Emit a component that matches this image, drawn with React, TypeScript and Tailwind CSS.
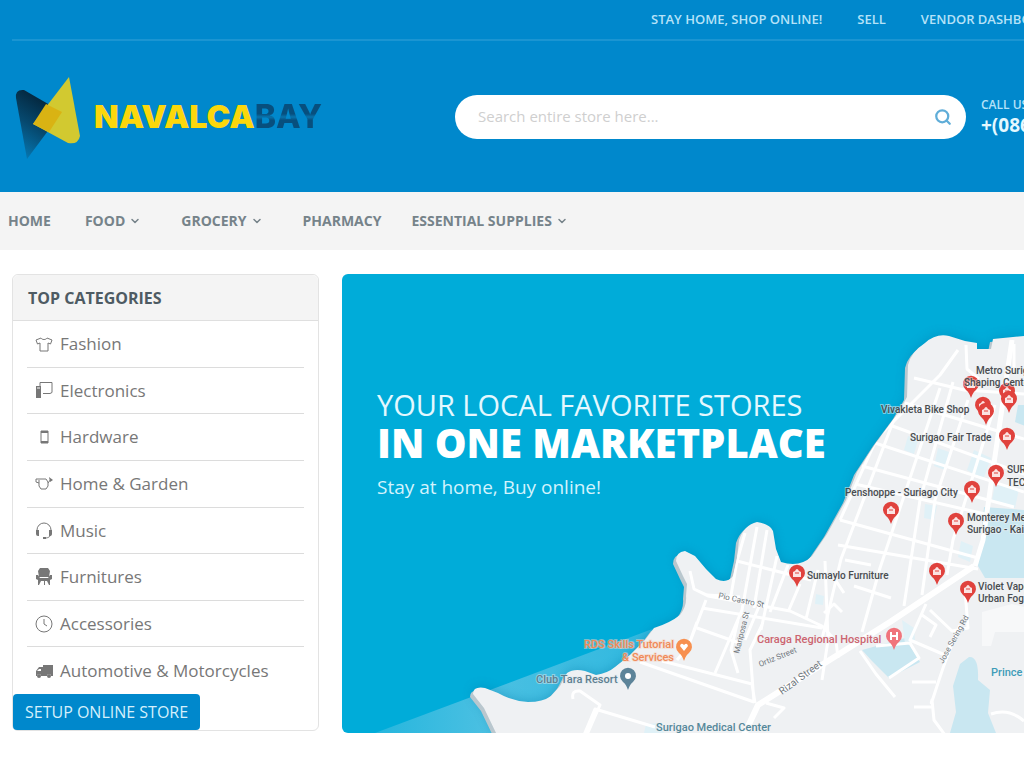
import type { ReactNode } from "react";
import { ChevronDown, Search } from "lucide-react";

const topLinks = ["STAY HOME, SHOP ONLINE!", "SELL", "VENDOR DASHBOARD"];

const menu = [
  { label: "HOME", gap: "mr-[34px]" },
  { label: "FOOD", gap: "mr-10", dropdown: true },
  { label: "GROCERY", gap: "mr-10", dropdown: true },
  { label: "PHARMACY", gap: "mr-[30px]" },
  { label: "ESSENTIAL SUPPLIES", gap: "", dropdown: true },
];

const categories: { label: string; icon: ReactNode }[] = [
  {
    label: "Fashion",
    icon: (
      <path d="M6 3 1 5l1.5 4L5 8v8h8V8l2.5 1L17 5l-5-2c-1 2-5 2-6 0Z" />
    ),
  },
  {
    label: "Electronics",
    icon: (
      <>
        <path d="M5 5V1.5h12v10l-2 1H8" />
        <path d="M1 5h5v12H1z" fill="currentColor" stroke="none" />
        <path d="M2 7h3" stroke="#ffffff" />
      </>
    ),
  },
  {
    label: "Hardware",
    icon: (
      <>
        <path d="M6 3h7v12H6z" />
        <path d="M6 4h7M6 14h7" strokeWidth="2" />
      </>
    ),
  },
  {
    label: "Home & Garden",
    icon: (
      <>
        <path d="M5 4h6l2 3v4l-2 3H6l-2-3V5M4 8 1 7V4h4M13 8l3-4" />
        <path d="m14 2 4 3-3 2z" fill="currentColor" stroke="none" />
      </>
    ),
  },
  {
    label: "Music",
    icon: (
      <>
        <path d="M2 9a7 7 0 0 1 14 0v3c0 3-2 5-6 5" />
        <path d="M1 9h3v6H3a2 2 0 0 1-2-2zM17 9h-3v6h1a2 2 0 0 0 2-2zM8 16h3v2H8z" fill="currentColor" stroke="none" />
      </>
    ),
  },
  {
    label: "Furnitures",
    icon: (
      <g fill="currentColor" stroke="none">
        <path d="M5 0h8l2 3-1 6H4L3 3z" />
        <path d="M1 7h2l2 3h8l2-3h2v4l-2 1v5h-1l-2-4h-2v4H9v-4H6l-2 4H3v-5l-2-1z" />
      </g>
    ),
  },
  {
    label: "Accessories",
    icon: (
      <>
        <circle cx="9" cy="9" r="8" />
        <path d="M9 4v5l3 2" />
      </>
    ),
  },
  {
    label: "Automotive & Motorcycles",
    icon: (
      <g fill="currentColor" stroke="none">
        <path d="M8 3h10v11h-2a2 2 0 0 0-4 0H6a2 2 0 0 0-4 0H1V9l3-4h4zM4 7 2 9h4V7z" fillRule="evenodd" />
        <circle cx="4" cy="14" r="2" />
        <circle cx="14" cy="14" r="2" />
      </g>
    ),
  },
];

const COAST =
  "M497 735 484 708 473 694Q473 686 485 688L498 693Q512 701 528 702 543 702 551 696L560 686 567 673Q574 668 585 671L596 675Q608 673 615 667L630 655 645 640 654 628Q670 623 680 615 687 606 686 596L687 584 683 576 676 561Q676 552 685 551L695 556 706 569 716 579Q727 584 733 576L737 558 739 540Q744 525 757 522 770 524 773 531L776 549 781 562Q800 568 812 556L827 534 846 500 857 472 876 443 896 416 907 397 908 365Q911 352 925 343 936 333 949 336L965 341 977 343 977 349 991 349 993 339 1024 336V735Z";

// [x, y] is the centre of the pin's head
const shopPins = [
  [971, 384],
  [1007, 391],
  [1009, 399],
  [983, 405],
  [986, 411],
  [1007, 436],
  [996, 473],
  [972, 489],
  [891, 510],
  [956, 521],
  [937, 571],
  [968, 589],
  [797, 573],
];

const shopLabels: [number, number, string][] = [
  [976, 374, "Metro Surigao"],
  [964, 386, "Shaping Center"],
  [881, 413, "Vivakleta Bike Shop"],
  [910, 441, "Surigao Fair Trade"],
  [1007, 473, "SURIGAO"],
  [1007, 486, "TECH"],
  [845, 496, "Penshoppe - Suriago City"],
  [967, 521, "Monterey Meat"],
  [967, 533, "Surigao - Kaimo"],
  [978, 590, "Violet Vape"],
  [978, 602, "Urban Fog"],
  [807, 579, "Sumaylo Furniture"],
];

function Pin({ x, y, color, children }: { x: number; y: number; color: string; children: ReactNode }) {
  return (
    <g transform={`translate(${x} ${y})`}>
      <path d="M0 14Q-2 8-5 6A8 8 0 1 1 5 6Q2 8 0 14Z" fill={color} />
      {children}
    </g>
  );
}

function StoreMap() {
  return (
    <svg
      className="absolute inset-0 h-full w-full font-[Roboto,sans-serif]"
      viewBox="342 274 682 459"
      preserveAspectRatio="xMaxYMax slice"
      role="img"
      aria-label="Map of local stores"
    >
      <defs>
        <filter id="soft" x="-10%" y="-10%" width="120%" height="120%">
          <feGaussianBlur stdDeviation="6" />
        </filter>
        <linearGradient id="shallow" x1="0" x2="1">
          <stop offset="0" stopColor="#4bc0e2" stopOpacity="0.5" />
          <stop offset="0.4" stopColor="#4bc0e2" />
          <stop offset="1" stopColor="#2fb8df" />
        </linearGradient>
        <clipPath id="land">
          <path d={COAST} />
        </clipPath>
      </defs>

      <path d="M375 733 655 628 640 733Z" fill="url(#shallow)" />
      <path d={COAST} fill="#0079a8" opacity="0.45" filter="url(#soft)" />
      <path d={COAST} fill="#b9c7ce" transform="translate(-3 3)" />
      <path d={COAST} fill="#eff1f3" />

      <g clipPath="url(#land)">
        <g fill="#c9e7f1">
          <path d="M984 507 1024 510V578H985L978 566Z" />
          <path d="M969 657Q979 656 978 680L990 690 988 713 996 733H950L956 712 953 686 960 664Z" />
          <path d="M862 650 905 638 920 662 889 678 872 661ZM1018 405h10v22l-13-5z" />
        </g>
        <g fill="#e0f1f7">
          <path d="m938 448 11 4-4 18-11-4zM974 450l17 8-8 22-16-10zM995 484l24 5-4 19-23-8zM925 504l12 2-3 14-10-2zM961 541l12 5-3 16-12-5zM816 594l8 2-1 9-8-1zM902 620l12 8 1 12-10 4z" />
          <path d="m646 724 14-1 4 10h-20zM908 436l10 4-4 14-10-4z" />
        </g>
        <g fill="none" stroke="#ffffff" strokeLinejoin="round">
          <path d="M744 735 758 705 890 622 974 566" strokeWidth="6" />
          <path d="M975 566 983 540 993 470 1012 340" strokeWidth="5" />
          <g strokeWidth="3">
            <path d="M840 520 877 438 940 375 958 350M872 442 1024 492M887 424l137 50M905 403l119 36M914 378l50 12 60 4M966 345l1 24 12 10M1014 344v30" />
            <path d="M840 520 978 558M838 545l140 24M896 414l-55 145-19 80M953 382 920 500 904 606M940 388l-60 180-18 64M968 400 935 500 922 595M995 405 953 540 947 575M855 484l130 30M862 466l152 41" />
            <path d="M690 571 694 589 708 596 790 611 822 626 836 641 838 658 M694 589 707 595 740 597M737 561l74 19M745 533 737 561 730 601M757 527 742 610 715 673M767 530 754 608M777 556 761 630M788 565 770 612M800 584 788 612M818 570 806 619M702 608l120 20M697 622 684 658M697 628l45 16M706 600 688 647 677 660" />
            <path d="M640 662 754 702M662 661 752 684M752 684 755 703M754 702 750 650 762 625M738 620 731 650 738 673M760 604 745 640M584 735 595 709 655 727M573 699q-2-9 7-8l20 14-14 32M825 561 828 640 822 680" />
            <path d="M926 604 910 640 945 655 953 640M922 615l14 10-6 12M930 610 952 631 968 628 965 590M960 625Q947 655 938 683T932 700L934 720 945 735M912 682h24M914 707h20M860 651 876 674 895 697M889 678l30-20-9-15-34 3M766 703l18 5-10 10M991 714q18-6 33 7" />
            <path d="M845 560l26 5M854 586l37 12M824 613l10-9 8 8M834 578l10 15" />
          </g>
        </g>
        <path d="M982 612l30-8 12 3v25h-29l-4 14h-9z" fill="#f7f8f9" />
      </g>

      <g fill="#6f777d" fontSize="8">
        <text transform="translate(718 598) rotate(12)">Pio Castro St</text>
        <text transform="translate(739 654) rotate(-76)">Mariposa St</text>
        <text transform="translate(760 667) rotate(-22)">Ortiz Street</text>
        <text transform="translate(782 695) rotate(-36)" fontSize="10">Rizal Street</text>
        <text transform="translate(943 664) rotate(-61)">Jose Sering Rd</text>
      </g>

      {shopPins.map(([x, y]) => (
        <Pin key={`${x}-${y}`} x={x} y={y} color="#e0423d">
          <path d="M-4 4V-1L-2-2Q0-6 2-2L4-1V4Z" fill="#fbe3e2" />
          <path d="M-2 0h4" stroke="#e0423d" />
        </Pin>
      ))}
      <Pin x={894} y={636} color="#f0747c">
        <path d="M-3-4V4M3-4V4M-3 0H3" stroke="#fff" strokeWidth="2" />
      </Pin>
      <Pin x={684} y={647} color="#f79050">
        <path d="M0 4-4-1Q-3-5 0-2 3-5 4-1Z" fill="#fff" />
      </Pin>
      <Pin x={628} y={676} color="#5d8499">
        <circle r="3" fill="#fff" />
      </Pin>

      <g fontSize="10" fontWeight="500" paintOrder="stroke" strokeWidth="2" strokeOpacity="0.5">
        <g fill="#484c50" stroke="#eff1f3">
          {shopLabels.map(([x, y, label]) => (
            <text key={label} x={x} y={y}>
              {label}
            </text>
          ))}
        </g>
        <g fill="#f08a58" stroke="#f5d3c2" textAnchor="end" fontSize="11">
          <text x="674" y="648">RDS Skills Tutorial</text>
          <text x="674" y="661">&amp; Services</text>
        </g>
        <text x="536" y="683" fill="#5e7f90" stroke="#dfe9ee" fontSize="11">Club Tara Resort</text>
        <text x="757" y="643" fill="#cc6570" stroke="#eff1f3" fontSize="11">Caraga Regional Hospital</text>
        <text x="656" y="731" fill="#55889a" stroke="#eff1f3" fontSize="11">Surigao Medical Center</text>
        <text x="991" y="676" fill="#3f9cb8" stroke="#eff1f3" fontSize="11">Prince Hotel</text>
      </g>
    </svg>
  );
}

function Logo() {
  return (
    <a href="#" className="flex items-center" aria-label="Navalcabay">
      <svg className="h-[84px] w-[70px]" viewBox="0 0 70 84" aria-hidden="true">
        <defs>
          <linearGradient id="fold" x1="0.6" x2="0.2" y1="0.1" y2="1">
            <stop offset="0" stopColor="#04243a" />
            <stop offset="0.5" stopColor="#06496f" />
            <stop offset="1" stopColor="#0578b3" />
          </linearGradient>
        </defs>
        <path d="M4 23Q3 14 12 15L50 37 15 84Z" fill="url(#fold)" />
        <path d="M57 2 68 61Q66 70 56 68L21 49Z" fill="#d2c930" />
        <path d="M34 29 50 37 37 57 21 49Z" fill="#d9b313" />
      </svg>
      <span className="ml-3 flex items-center font-[Inter,sans-serif] text-[32px] leading-8">
        <span className="font-black text-[#fbd70c]">NAVALCA</span>
        <span className="bg-linear-to-b from-[#074f7e] from-40% via-[#0773ad] via-50% to-[#074f7e] to-60% bg-clip-text font-extrabold text-transparent">
          BAY
        </span>
      </span>
    </a>
  );
}

export default function App() {
  return (
    <div className="min-h-screen overflow-hidden bg-white font-['Open_Sans',sans-serif] text-[#777777]">
      <header className="bg-[#0088cc] text-white">
        <div className="ml-3 flex h-[41px] items-center justify-end border-b-2 border-[#1b95d2]">
          <nav className="flex w-[373px] gap-[35px] overflow-hidden text-[13px] font-semibold whitespace-nowrap text-[#b5e2f8]">
            {topLinks.map((link) => (
              <a key={link} href="#">
                {link}
              </a>
            ))}
          </nav>
        </div>

        <div className="flex h-[151px] items-center pl-3">
          <div className="w-[443px] shrink-0">
            <Logo />
          </div>
          <form className="flex h-11 flex-1 items-center rounded-full bg-white pr-3 pl-[23px]">
            <input
              type="search"
              aria-label="Search entire store"
              placeholder="Search entire store here..."
              className="min-w-0 flex-1 bg-transparent text-[15px] text-gray-700 outline-none placeholder:text-[#cfcfcf]"
            />
            <button type="button" aria-label="Search" className="p-0.5 text-[#5fadd8]">
              <Search className="size-[18px]" strokeWidth={3} />
            </button>
          </form>
          <div className="ml-[15px] w-[43px] shrink-0 overflow-hidden whitespace-nowrap">
            <p className="text-xs leading-4 font-semibold text-[#b5e2f8]">CALL US NOW</p>
            <p className="text-[19px] leading-6 font-bold text-[#e4f8ff]">+(086) 826 1234</p>
          </div>
        </div>
      </header>

      <nav className="flex h-[58px] items-center bg-[#f4f4f4] pl-2 text-sm font-bold whitespace-nowrap text-[#76838a]">
        {menu.map((item) => (
          <a key={item.label} href="#" className={`flex items-center gap-1 ${item.gap}`}>
            {item.label}
            {item.dropdown && <ChevronDown className="size-3" strokeWidth={3} />}
          </a>
        ))}
      </nav>

      <main className="flex items-start gap-[23px] pt-6 pl-3">
        <aside className="w-[307px] shrink-0 rounded-md border border-[#e3e3e3]">
          <h2 className="flex h-[46px] items-center rounded-t-md border-b border-[#dfdfdf] bg-[#f4f4f4] px-[15px] text-base font-bold text-[#4e5b63]">
            TOP CATEGORIES
          </h2>
          <ul className="mx-3.5 grid h-[373px] grid-rows-8">
            {categories.map(({ label, icon }) => (
              <li key={label} className="border-b border-[#dcdcdc] last:border-0">
                <a href="#" className="flex h-full items-center gap-[7px] pl-2 text-[17px]">
                  <svg
                    className="size-[18px]"
                    viewBox="0 0 18 18"
                    fill="none"
                    stroke="currentColor"
                    aria-hidden="true"
                  >
                    {icon}
                  </svg>
                  {label}
                </a>
              </li>
            ))}
          </ul>
          <button
            type="button"
            className="block h-9 rounded bg-[#0088cc] px-3 text-base font-medium whitespace-nowrap text-[#d5f0fc]"
          >
            SETUP ONLINE STORE
          </button>
        </aside>

        <section className="relative min-h-[459px] flex-1 overflow-hidden rounded-l-md bg-[#00acd9]">
          <StoreMap />
          <div className="relative pt-[111px] pl-[35px] whitespace-nowrap text-white">
            <h1>
              <span className="block text-[29px] leading-10 text-[#e4f8ff]">YOUR LOCAL FAVORITE STORES</span>
              <span className="block text-[40px] leading-9 font-extrabold">IN ONE MARKETPLACE</span>
            </h1>
            <p className="mt-2.5 text-[19px] leading-8 text-[#d3f3fd]">Stay at home, Buy online!</p>
          </div>
        </section>
      </main>
    </div>
  );
}
